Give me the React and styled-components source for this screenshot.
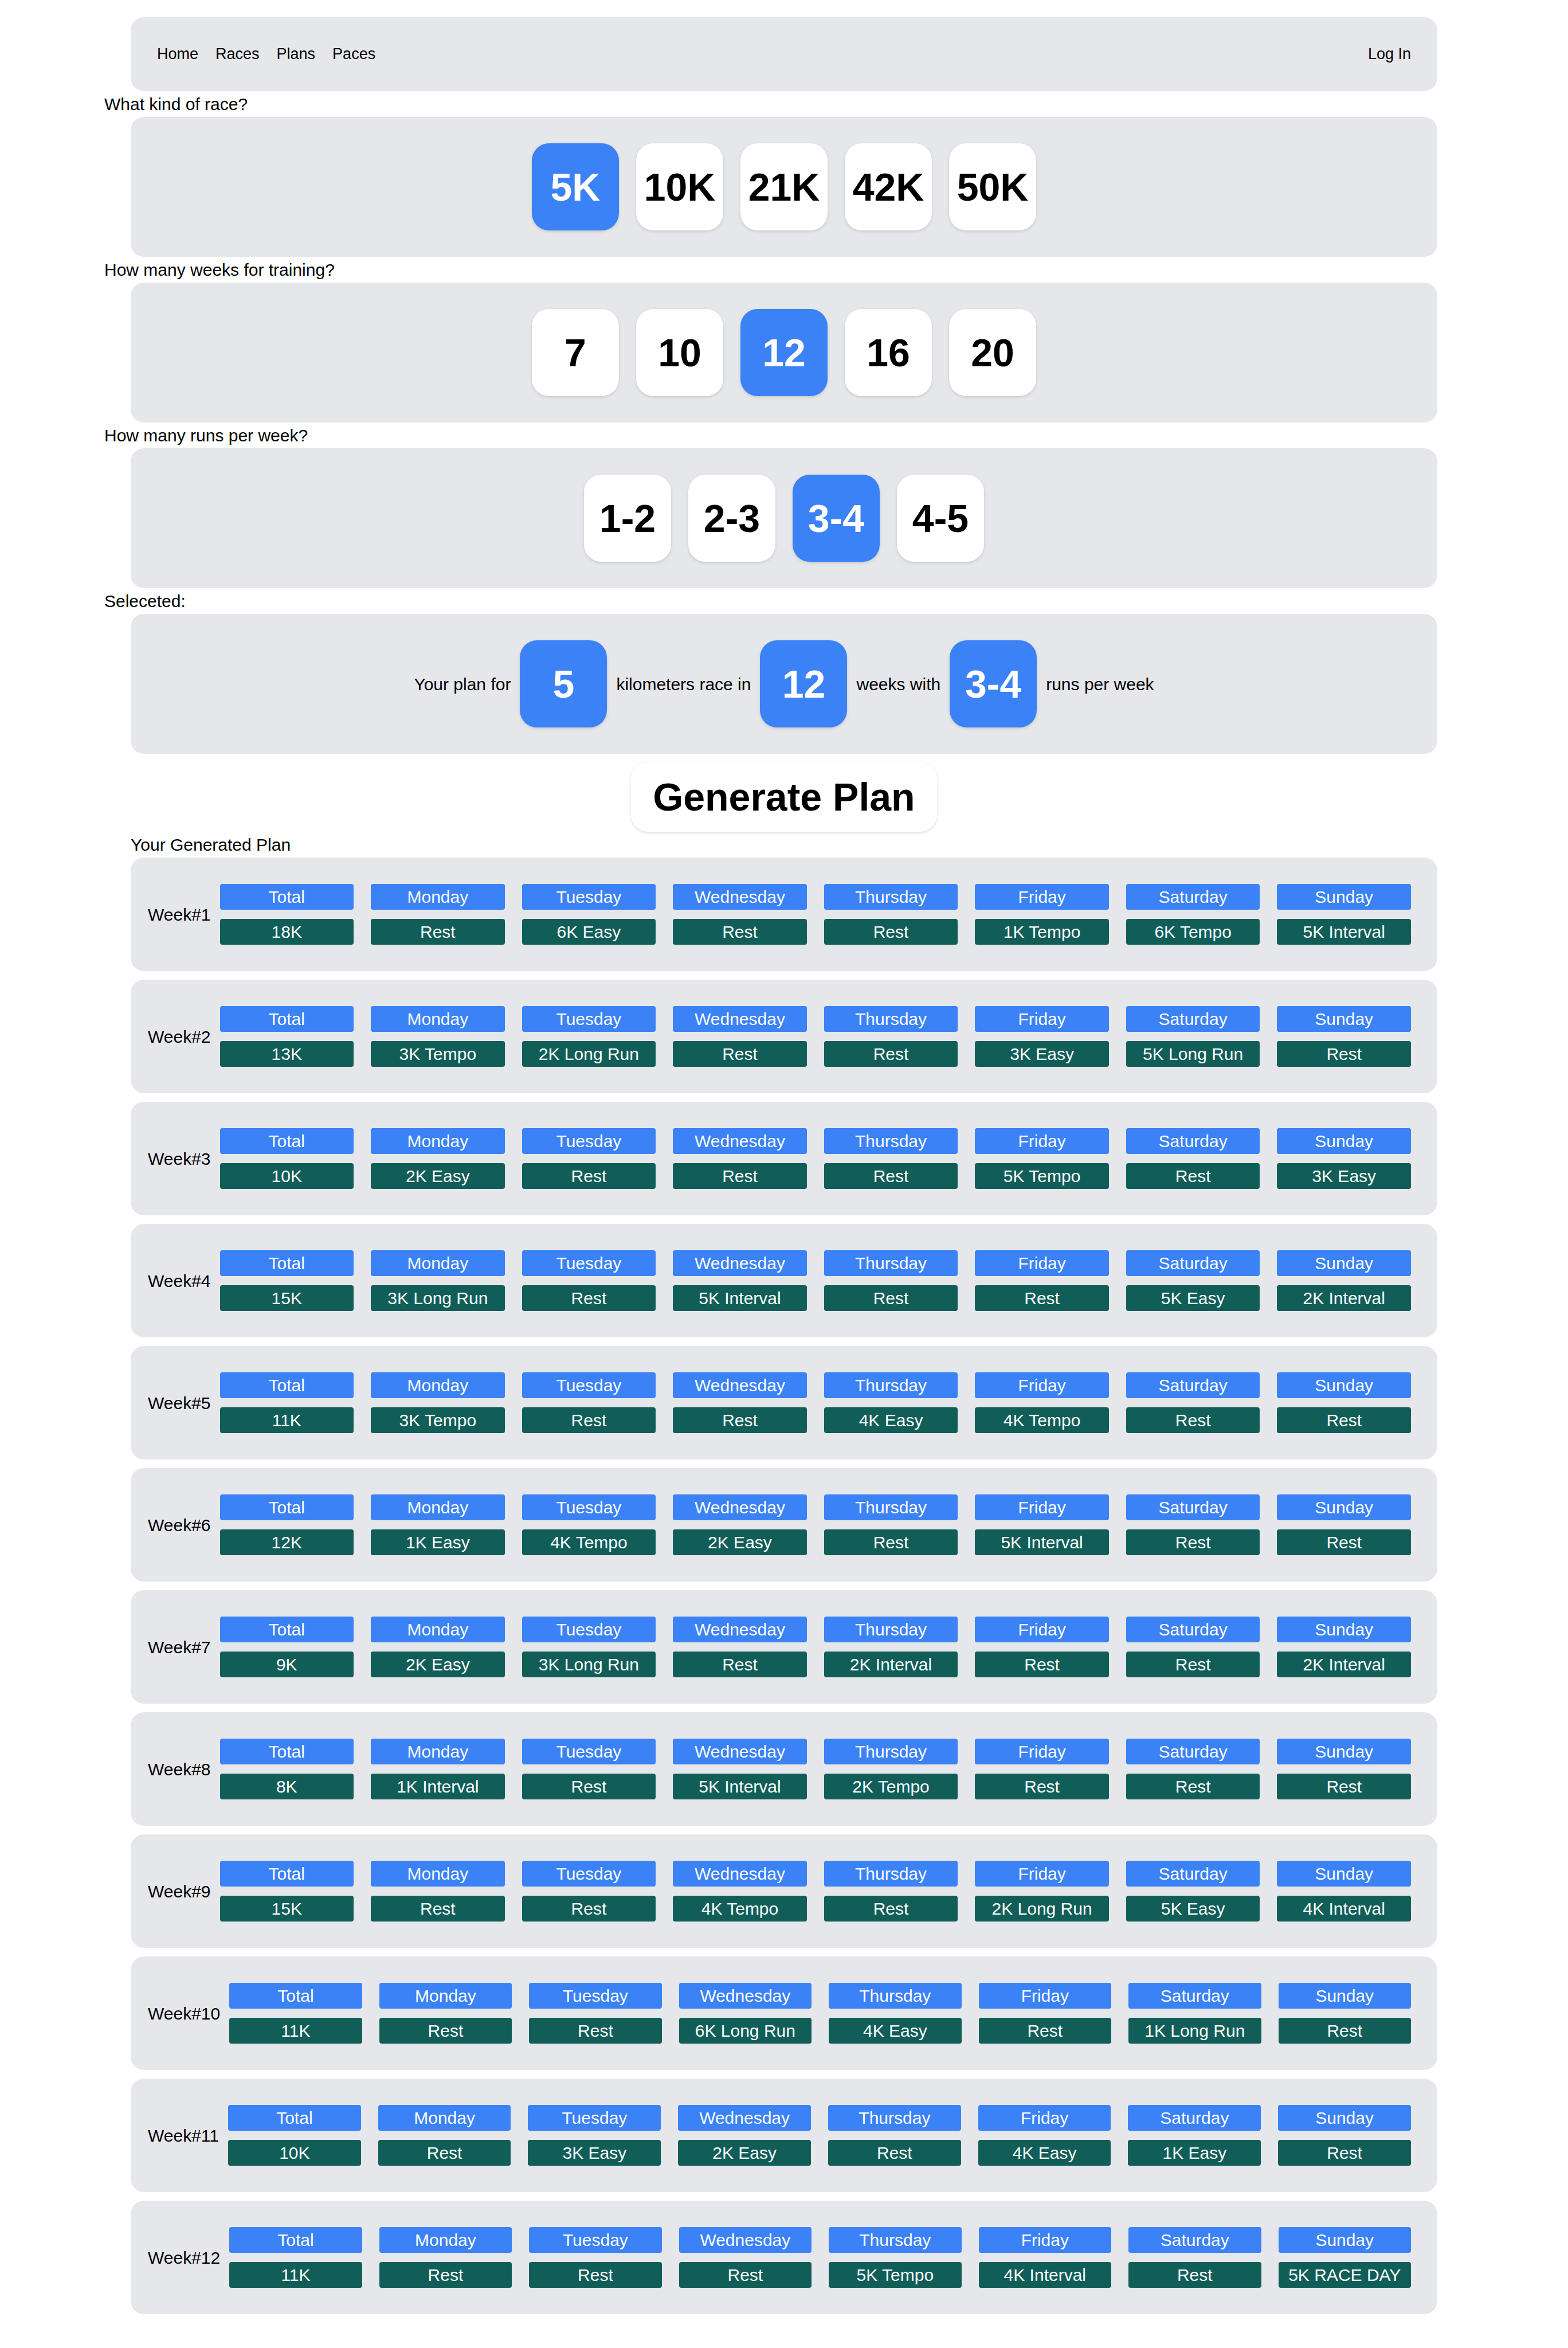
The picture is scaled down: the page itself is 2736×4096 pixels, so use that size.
import React, { useState } from "react";
import styled, { createGlobalStyle } from "styled-components";

const GlobalStyle = createGlobalStyle`
  *, *::before, *::after { box-sizing: border-box; }
  body {
    margin: 0;
    background: #ffffff;
    color: #000000;
    font-family: "Liberation Sans", Arial, Helvetica, sans-serif;
    font-size: 30px;
    line-height: 45px;
  }
  button {
    font-family: inherit;
    border: 0;
    cursor: pointer;
  }
`;

const Page = styled.div`
  padding: 30px 182px 46px;
`;

const NavBar = styled.nav`
  display: flex;
  justify-content: space-between;
  margin: 0 46px;
  padding: 46px;
  border-radius: 23px;
  background: #e5e7eb;
  font-size: 27px;
  line-height: 37px;
`;

const NavLinks = styled.div`
  display: flex;
  gap: 30px;
`;

const NavLink = styled.a`
  color: inherit;
  text-decoration: none;
`;

const Question = styled.h2`
  margin: 0;
  font-size: inherit;
  font-weight: 400;
`;

const Panel = styled.div`
  display: flex;
  align-items: center;
  justify-content: center;
  gap: ${(p) => p.$gap}px;
  margin: 0 46px;
  padding: 46px;
  border-radius: 23px;
  background: #e5e7eb;
`;

const softShadow = "0 2px 6px rgba(0, 0, 0, 0.1), 0 2px 4px -2px rgba(0, 0, 0, 0.1)";

const Tile = styled.button`
  display: flex;
  align-items: center;
  justify-content: center;
  width: 152px;
  height: 152px;
  padding: 0;
  border-radius: 30px;
  box-shadow: ${softShadow};
  background: ${(p) => (p.$active ? "#3b82f6" : "#ffffff")};
  color: ${(p) => (p.$active ? "#ffffff" : "#000000")};
  font-size: 68px;
  font-weight: 700;
  line-height: 75px;
  white-space: nowrap;
`;

const GenerateButton = styled.button`
  display: block;
  margin: 15px auto 0;
  padding: 23px 38px;
  border-radius: 30px;
  box-shadow: ${softShadow};
  background: #ffffff;
  color: #000000;
  font-size: 68px;
  font-weight: 700;
  line-height: 75px;
`;

const Plan = styled.section`
  margin: 0 46px;
`;

const WeekList = styled.div`
  display: flex;
  flex-direction: column;
  gap: 15px;
`;

const WeekTable = styled.table`
  display: grid;
  grid-template-columns: auto 1fr;
  gap: 16px;
  padding: 46px 46px 46px 30px;
  border-radius: 23px;
  background: #e5e7eb;
`;

const WeekName = styled.caption`
  display: block;
  grid-row: 1 / span 2;
  align-self: center;
`;

const HeadGroup = styled.thead`
  display: contents;
`;

const BodyGroup = styled.tbody`
  display: contents;
`;

const DayRow = styled.tr`
  display: grid;
  grid-template-columns: repeat(8, minmax(0, 1fr));
  gap: 30px;
`;

const DayHead = styled.th`
  padding: 0;
  border-radius: 4px;
  background: #3b82f6;
  color: #ffffff;
  font-weight: 400;
  text-align: center;
  white-space: nowrap;
`;

const DayRun = styled.td`
  padding: 0;
  border-radius: 4px;
  background: #115e59;
  color: #ffffff;
  text-align: center;
  white-space: nowrap;
`;

const RACES = ["5K", "10K", "21K", "42K", "50K"];
const WEEKS = ["7", "10", "12", "16", "20"];
const RUNS = ["1-2", "2-3", "3-4", "4-5"];
const COLUMNS = ["Total", "Monday", "Tuesday", "Wednesday", "Thursday", "Friday", "Saturday", "Sunday"];

const PLAN = [
  ["18K", "Rest", "6K Easy", "Rest", "Rest", "1K Tempo", "6K Tempo", "5K Interval"],
  ["13K", "3K Tempo", "2K Long Run", "Rest", "Rest", "3K Easy", "5K Long Run", "Rest"],
  ["10K", "2K Easy", "Rest", "Rest", "Rest", "5K Tempo", "Rest", "3K Easy"],
  ["15K", "3K Long Run", "Rest", "5K Interval", "Rest", "Rest", "5K Easy", "2K Interval"],
  ["11K", "3K Tempo", "Rest", "Rest", "4K Easy", "4K Tempo", "Rest", "Rest"],
  ["12K", "1K Easy", "4K Tempo", "2K Easy", "Rest", "5K Interval", "Rest", "Rest"],
  ["9K", "2K Easy", "3K Long Run", "Rest", "2K Interval", "Rest", "Rest", "2K Interval"],
  ["8K", "1K Interval", "Rest", "5K Interval", "2K Tempo", "Rest", "Rest", "Rest"],
  ["15K", "Rest", "Rest", "4K Tempo", "Rest", "2K Long Run", "5K Easy", "4K Interval"],
  ["11K", "Rest", "Rest", "6K Long Run", "4K Easy", "Rest", "1K Long Run", "Rest"],
  ["10K", "Rest", "3K Easy", "2K Easy", "Rest", "4K Easy", "1K Easy", "Rest"],
  ["11K", "Rest", "Rest", "Rest", "5K Tempo", "4K Interval", "Rest", "5K RACE DAY"],
];

function Picker({ id, question, options, value, onPick }) {
  return (
    <section>
      <Question id={id}>{question}</Question>
      <Panel $gap={30} role="group" aria-labelledby={id}>
        {options.map((option) => (
          <Tile
            key={option}
            type="button"
            $active={option === value}
            aria-pressed={option === value}
            onClick={() => onPick(option)}
          >
            {option}
          </Tile>
        ))}
      </Panel>
    </section>
  );
}

function Week({ number, runs }) {
  return (
    <WeekTable>
      <WeekName>Week#{number}</WeekName>
      <HeadGroup>
        <DayRow>
          {COLUMNS.map((name) => (
            <DayHead key={name} scope="col">{name}</DayHead>
          ))}
        </DayRow>
      </HeadGroup>
      <BodyGroup>
        <DayRow>
          {runs.map((run, i) => (
            <DayRun key={COLUMNS[i]}>{run}</DayRun>
          ))}
        </DayRow>
      </BodyGroup>
    </WeekTable>
  );
}

export default function App() {
  const [race, setRace] = useState("5K");
  const [weeks, setWeeks] = useState("12");
  const [runs, setRuns] = useState("3-4");

  return (
    <>
      <GlobalStyle />
      <Page>
        <NavBar>
          <NavLinks>
            <NavLink href="#home">Home</NavLink>
            <NavLink href="#races">Races</NavLink>
            <NavLink href="#plans">Plans</NavLink>
            <NavLink href="#paces">Paces</NavLink>
          </NavLinks>
          <NavLink href="#login">Log In</NavLink>
        </NavBar>
        <main>
          <Picker id="race" question="What kind of race?" options={RACES} value={race} onPick={setRace} />
          <Picker id="weeks" question="How many weeks for training?" options={WEEKS} value={weeks} onPick={setWeeks} />
          <Picker id="runs" question="How many runs per week?" options={RUNS} value={runs} onPick={setRuns} />
          <section>
            <Question>Seleceted:</Question>
            <Panel $gap={16}>
              <span>Your plan for</span>
              <Tile as="strong" $active>{race.replace("K", "")}</Tile>
              <span>kilometers race in</span>
              <Tile as="strong" $active>{weeks}</Tile>
              <span>weeks with</span>
              <Tile as="strong" $active>{runs}</Tile>
              <span>runs per week</span>
            </Panel>
          </section>
          <GenerateButton type="button">Generate Plan</GenerateButton>
          <Plan>
            <Question>Your Generated Plan</Question>
            <WeekList>
              {PLAN.map((row, i) => (
                <Week key={i} number={i + 1} runs={row} />
              ))}
            </WeekList>
          </Plan>
        </main>
      </Page>
    </>
  );
}
